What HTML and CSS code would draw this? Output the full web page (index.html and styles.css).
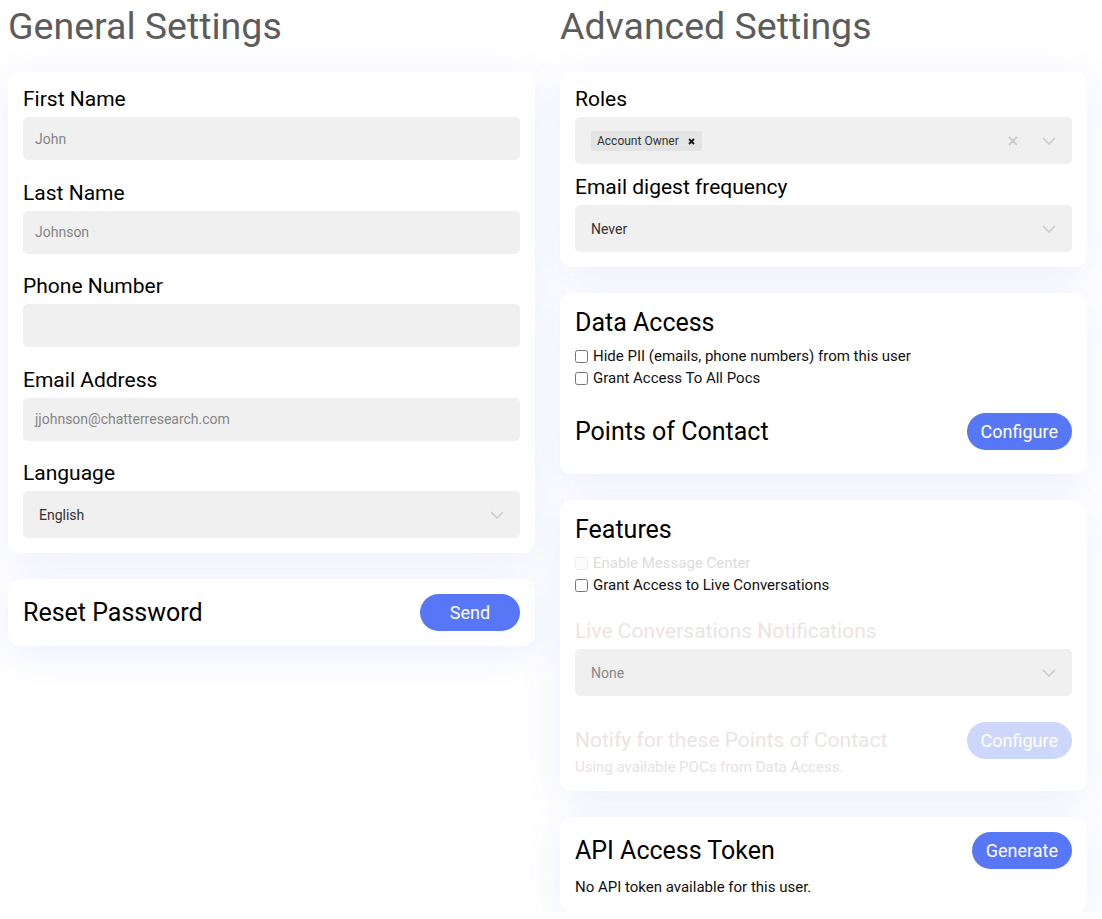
FILE: index.html
```html
<!DOCTYPE html>
<html>
<head>
<meta charset="utf-8">
<link rel="stylesheet" href="styles.css">
</head>
<body>
<div class="page">
  <section class="col">
    <h1 class="page-title">General Settings</h1>
    <div class="card">
      <div class="field">
        <label class="label">First Name</label>
        <div class="input">John</div>
      </div>
      <div class="field">
        <label class="label">Last Name</label>
        <div class="input">Johnson</div>
      </div>
      <div class="field">
        <label class="label">Phone Number</label>
        <div class="input"></div>
      </div>
      <div class="field">
        <label class="label">Email Address</label>
        <div class="input">jjohnson@chatterresearch.com</div>
      </div>
      <div class="field">
        <label class="label">Language</label>
        <div class="select">
          <span class="select-value">English</span>
          <span class="indicators">
            <svg class="chev" width="14" height="8" viewBox="0 0 14 8"><path d="M1 1l6 6 6-6" fill="none" stroke="currentColor" stroke-width="1.6"/></svg>
          </span>
        </div>
      </div>
    </div>
    <div class="card">
      <div class="row">
        <h2 class="card-title">Reset Password</h2>
        <button class="btn">Send</button>
      </div>
    </div>
  </section>

  <section class="col">
    <h1 class="page-title">Advanced Settings</h1>
    <div class="card">
      <div class="field tight">
        <label class="label">Roles</label>
        <div class="select">
          <span class="chip">Account Owner <svg class="chip-x" width="7" height="7" viewBox="0 0 7 7"><path d="M1 1l5 5M6 1l-5 5" stroke="#111" stroke-width="1.8"/></svg></span>
          <span class="indicators">
            <svg class="clear" width="10" height="10" viewBox="0 0 10 10"><path d="M1 1l8 8M9 1l-8 8" stroke="currentColor" stroke-width="2"/></svg>
            <svg class="chev" width="14" height="8" viewBox="0 0 14 8"><path d="M1 1l6 6 6-6" fill="none" stroke="currentColor" stroke-width="1.6"/></svg>
          </span>
        </div>
      </div>
      <div class="field tight">
        <label class="label">Email digest frequency</label>
        <div class="select">
          <span class="select-value">Never</span>
          <span class="indicators">
            <svg class="chev" width="14" height="8" viewBox="0 0 14 8"><path d="M1 1l6 6 6-6" fill="none" stroke="currentColor" stroke-width="1.6"/></svg>
          </span>
        </div>
      </div>
    </div>

    <div class="card">
      <h2 class="card-title">Data Access</h2>
      <div class="checks">
        <label class="check"><input type="checkbox"> Hide PII (emails, phone numbers) from this user</label>
        <label class="check"><input type="checkbox"> Grant Access To All Pocs</label>
      </div>
      <div class="row poc-row">
        <h2 class="card-title">Points of Contact</h2>
        <button class="btn">Configure</button>
      </div>
    </div>

    <div class="card">
      <h2 class="card-title">Features</h2>
      <div class="checks">
        <label class="check disabled"><input type="checkbox" disabled> Enable Message Center</label>
        <label class="check"><input type="checkbox"> Grant Access to Live Conversations</label>
      </div>
      <div class="field notif">
        <label class="label disabled-text">Live Conversations Notifications</label>
        <div class="select">
          <span class="select-value muted">None</span>
          <span class="indicators">
            <svg class="chev" width="14" height="8" viewBox="0 0 14 8"><path d="M1 1l6 6 6-6" fill="none" stroke="currentColor" stroke-width="1.6"/></svg>
          </span>
        </div>
      </div>
      <div class="row notify-row">
        <div class="notify-text">
          <div class="notify-title">Notify for these Points of Contact</div>
          <div class="notify-sub">Using available POCs from Data Access.</div>
        </div>
        <button class="btn btn-disabled" disabled>Configure</button>
      </div>
    </div>

    <div class="card">
      <div class="row">
        <h2 class="card-title">API Access Token</h2>
        <button class="btn">Generate</button>
      </div>
      <p class="note">No API token available for this user.</p>
    </div>
  </section>
</div>
</body>
</html>
```

FILE: styles.css
```css
* { box-sizing: border-box; }

html, body {
  margin: 0;
  padding: 0;
  background: #ffffff;
}

body {
  font-family: Roboto, "Liberation Sans", sans-serif;
  color: #000;
}

.page {
  display: grid;
  grid-template-columns: 527px 527px;
  column-gap: 25px;
  padding: 4px 0 0 8px;
}

.col {
  display: flex;
  flex-direction: column;
  gap: 26px;
}

.page-title {
  margin: 0 0 -2px 0;
  font-size: 37.5px;
  line-height: 44px;
  font-weight: 400;
  color: #5c5c5c;
}

.card {
  background: #fff;
  border-radius: 12px;
  padding: 15px;
  box-shadow: 0 8px 40px rgba(80, 100, 240, 0.11);
}

.field + .field { margin-top: 20.5px; }
.field.tight + .field.tight { margin-top: 11px; }

.label {
  display: block;
  font-size: 21px;
  line-height: 24px;
  margin-bottom: 6px;
  color: #000;
}

.input {
  height: 43px;
  background: #f0f0f0;
  border-radius: 5px;
  padding: 0 12px;
  display: flex;
  align-items: center;
  font-size: 14px;
  color: #858585;
}

.select {
  height: 47px;
  background: #f0f0f0;
  border-radius: 5px;
  padding: 0 16px;
  display: flex;
  align-items: center;
  font-size: 14px;
  color: #333;
}

.select-value { flex: 1; }
.select-value.muted { color: #8a8a8a; }

.indicators {
  margin-left: auto;
  display: flex;
  align-items: center;
  gap: 24px;
  color: #cccccc;
}

.chev { display: block; }
.clear { display: block; }

.chip {
  display: inline-flex;
  align-items: center;
  height: 20px;
  padding: 0 7px 0 6px;
  background: #e4e4e4;
  border-radius: 2px;
  font-size: 12px;
  color: #333;
  gap: 9px;
}
.chip-x { display: block; margin-top: 1px; }

.row {
  display: flex;
  align-items: center;
  justify-content: space-between;
}

.card-title {
  margin: 0;
  font-size: 25px;
  line-height: 29px;
  font-weight: 400;
  color: #000;
}

.btn {
  font-family: Roboto, "Liberation Sans", sans-serif;
  font-size: 18px;
  height: 37px;
  min-width: 100px;
  padding: 0 14px;
  border: none;
  border-radius: 19px;
  background: #5777f6;
  color: #fff;
}

.btn-disabled {
  background: #cdd7fc;
}

.checks {
  display: flex;
  flex-direction: column;
  margin-top: 8px;
}

.check {
  display: flex;
  align-items: center;
  height: 22px;
  font-size: 15px;
  color: #111;
}

.check input {
  margin: 0 5px 0 0;
  width: 13px;
  height: 13px;
}

.check.disabled { color: #dcdcdc; }
.check.disabled input { opacity: 0.35; }

.poc-row {
  margin-top: 24px;
  margin-bottom: 9px;
}

.notif { margin-top: 23px; }
.disabled-text { color: #ebe4e4; }

.notify-row {
  margin-top: 26px;
  align-items: flex-start;
}

.notify-title {
  font-size: 21px;
  line-height: 36px;
  color: #ebe4e4;
}

.notify-sub {
  font-size: 15px;
  line-height: 18px;
  color: #e6e2e2;
}

.note {
  margin: 8px 0 0 0;
  font-size: 15px;
  line-height: 20px;
  color: #111;
}
```
